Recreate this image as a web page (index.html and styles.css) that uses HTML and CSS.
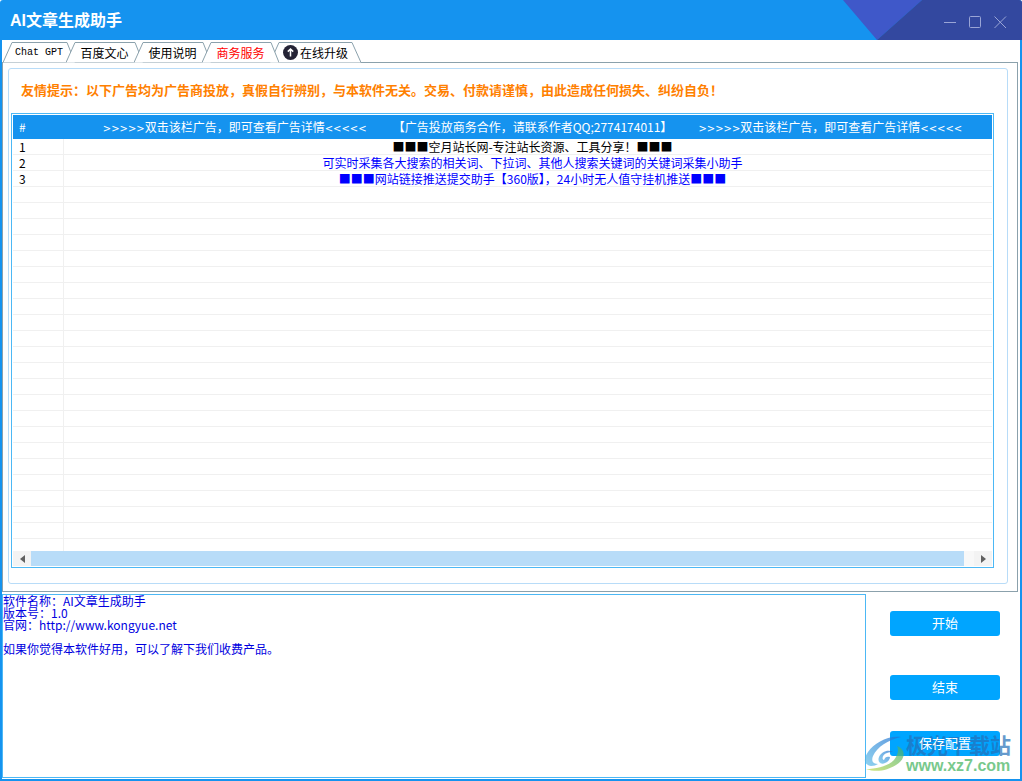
FILE: index.html
```html
<!DOCTYPE html>
<html lang="zh-CN">
<head>
<meta charset="utf-8">
<title>AI文章生成助手</title>
<link rel="stylesheet" href="styles.css">
</head>
<body>
<div class="window">
  <header class="titlebar">
    <h1 class="title">AI文章生成助手</h1>
    <div class="corner">
      <svg class="corner-art" viewBox="0 0 179 40" preserveAspectRatio="none" aria-hidden="true">
        <path d="M0 0H79L34 40Z" fill="#3f58c9"/>
        <path d="M79 0H179V40H34Z" fill="#33489f"/>
      </svg>
      <div class="controls">
        <button class="control" aria-label="最小化"><svg viewBox="0 0 13 13"><path d="M0 6.5H12"/></svg></button>
        <button class="control" aria-label="最大化"><svg viewBox="0 0 13 13"><rect x=".5" y=".5" width="11" height="11" rx="1"/></svg></button>
        <button class="control" aria-label="关闭"><svg viewBox="0 0 13 13"><path d="M.5 .5L12 12M12 .5L.5 12"/></svg></button>
      </div>
    </div>
  </header>
  <main class="content">
    <nav class="tabs">
      <button class="tab tab-mono"><svg class="tab-shape" viewBox="0 0 72 21" preserveAspectRatio="none"><path d="M0 20.5L9 .5H64L72 20.5"/></svg><span>Chat GPT</span></button>
      <button class="tab"><svg class="tab-shape" viewBox="0 0 77 21" preserveAspectRatio="none"><path d="M0 20.5L9 .5H69L77 20.5"/></svg><span>百度文心</span></button>
      <button class="tab"><svg class="tab-shape" viewBox="0 0 77 21" preserveAspectRatio="none"><path d="M0 20.5L9 .5H69L77 20.5"/></svg><span>使用说明</span></button>
      <button class="tab tab-active"><svg class="tab-shape" viewBox="0 0 77 21" preserveAspectRatio="none"><path d="M0 20.5L9 .5H69L77 20.5"/></svg><span>商务服务</span></button>
      <button class="tab tab-wide"><svg class="tab-shape" viewBox="0 0 91 21" preserveAspectRatio="none"><path d="M0 20.5L9 .5H82L91 20.5"/></svg><svg class="tab-icon" viewBox="0 0 15 15"><circle cx="7.5" cy="7.5" r="7.5" fill="#252436"/><path d="M7.5 11.5V4M4.8 6.6L7.5 4L10.2 6.6" fill="none" stroke="#fff" stroke-width="1.5"/></svg><span>在线升级</span></button>
    </nav>
    <section class="pane">
      <div class="group">
        <p class="notice">友情提示：以下广告均为广告商投放，真假自行辨别，与本软件无关。交易、付款请谨慎，由此造成任何损失、纠纷自负！</p>
        <div class="list">
          <div class="list-view">
            <table class="ads">
              <thead>
                <tr><th class="num">#</th><th><div class="ad-head"><span><span class="arrows">&gt;&gt;&gt;&gt;&gt;</span>双击该栏广告，即可查看广告详情<span class="arrows">&lt;&lt;&lt;&lt;&lt;</span></span><span>【广告投放商务合作，请联系作者QQ;2774174011】</span><span><span class="arrows">&gt;&gt;&gt;&gt;&gt;</span>双击该栏广告，即可查看广告详情<span class="arrows">&lt;&lt;&lt;&lt;&lt;</span></span></div></th></tr>
              </thead>
              <tbody>
                <tr class="plain"><td class="num">1</td><td>■■■空月站长网-专注站长资源、工具分享！■■■</td></tr>
                <tr><td class="num">2</td><td>可实时采集各大搜索的相关词、下拉词、其他人搜索关键词的关键词采集小助手</td></tr>
                <tr><td class="num">3</td><td>■■■网站链接推送提交助手【360版】，24小时无人值守挂机推送■■■</td></tr>
              </tbody>
            </table>
            <div class="empty-rows"></div>
          </div>
          <div class="scrollbar">
            <button class="arrow" aria-label="向左"><svg viewBox="0 0 5 8"><path d="M5 0V8L0 4Z"/></svg></button>
            <div class="track"><div class="thumb"></div></div>
            <button class="arrow" aria-label="向右"><svg viewBox="0 0 5 8"><path d="M0 0V8L5 4Z"/></svg></button>
          </div>
        </div>
      </div>
    </section>
    <section class="bottom">
      <textarea class="log" aria-label="日志" spellcheck="false">软件名称：AI文章生成助手
版本号：1.0
官网：http://www.kongyue.net

如果你觉得本软件好用，可以了解下我们收费产品。</textarea>
      <div class="actions">
        <button class="action">开始</button>
        <button class="action">结束</button>
        <button class="action action-save"><span>保存配置</span></button>
      </div>
    </section>
  </main>
  <div class="watermark">
    <svg class="mark-logo" viewBox="0 0 40 36" aria-hidden="true">
      <defs>
        <linearGradient id="blue" x1="0" y1="1" x2="1" y2="0"><stop offset="0" stop-color="#5fc0ea"/><stop offset="1" stop-color="#1f6fd0"/></linearGradient>
        <linearGradient id="green" x1="0" y1="1" x2="1" y2="0"><stop offset="0" stop-color="#c3dc4c"/><stop offset="1" stop-color="#3fae72"/></linearGradient>
      </defs>
      <path d="M37 1C24 -1 10 7 4 16C-1 23 0 29 7 30C10 30 12 29 14 28C9 28 7 25 9 20C13 11 24 4 37 1Z" fill="url(#blue)"/>
      <path d="M29 16C24 13 17 16 15 21C13 26 17 29 21 27C24 26 26 23 26 21C23 20 21 21 20 24C17 23 19 18 23 17C25 16 27 16 29 16Z" fill="url(#blue)"/>
      <path d="M33 10C43 14 41 24 32 29C24 34 13 37 2 33C13 33 24 30 30 24C34 19 35 14 33 10Z" fill="url(#green)"/>
    </svg>
    <div class="mark-text"><span class="mark-name">极光下载站</span><span class="mark-url">www.xz7.com</span></div>
  </div>
</div>
</body>
</html>
```
FILE: styles.css
```css
* { box-sizing: border-box; }
html, body { height: 100%; margin: 0; }
body {
  background: #fff;
  font-family: "Noto Sans CJK SC", sans-serif;
  font-size: 12px;
  color: #000;
}
button { border: 0; background: none; padding: 0; margin: 0; font: inherit; color: inherit; }
.window { position: relative; height: 100vh; display: flex; flex-direction: column; background: #1593ef; border-radius: 3px 3px 0 0; overflow: hidden; }
.titlebar { flex: none; height: 40px; display: flex; justify-content: space-between; align-items: center; padding-left: 10px; color: #fff; }
.title { margin: 0; padding-top: 2px; font-family: "Liberation Sans", "Noto Sans CJK SC", sans-serif; font-size: 16px; font-weight: 700; line-height: 24px; }
.corner { position: relative; width: 179px; height: 40px; display: flex; justify-content: flex-end; align-items: center; padding: 4px 15px 0 0; }
.corner-art { position: absolute; inset: 0; width: 100%; height: 100%; }
.controls { position: relative; display: flex; gap: 12px; }
.control { width: 13px; height: 13px; display: block; }
.control svg { display: block; width: 13px; height: 13px; fill: none; stroke: #9aa5d6; }

.content { flex: 1; min-height: 0; display: flex; flex-direction: column; margin: 0 2px 2px; background: #fff; }
.tabs { flex: none; display: flex; height: 23px; padding: 2px 0 0 1px; }
.tab { position: relative; width: 77px; height: 21px; margin-right: -9px; display: flex; align-items: center; justify-content: center; line-height: 18px; }
.tab span { position: relative; }
.tab-mono { width: 72px; font-family: "Liberation Mono", monospace; font-size: 10px; }
.tab-wide { width: 91px; gap: 2px; }
.tab-icon { position: relative; width: 15px; height: 15px; }
.tab-shape { position: absolute; inset: 0; width: 100%; height: 100%; fill: #fff; stroke: #8ba1ac; }
.tab-active { color: #f00; z-index: 1; }
.pane { flex: 1; min-height: 0; display: flex; margin: -1px 2px 0 0; padding: 5px 9px 7px 5px; border: 1px solid #8ba1ac; }
.group { flex: 1; min-width: 0; display: flex; flex-direction: column; padding: 0 13px 15px 2px; border: 1px solid #b8dcf8; border-radius: 3px; }
.notice { margin: 0; padding: 11px 0 13px 10px; font-size: 13px; font-weight: 700; line-height: 20px; color: #ff8000; white-space: nowrap; }
.list { flex: 1; min-height: 0; display: flex; flex-direction: column; padding: 1px; border: 1px solid #4cb8f5; }
.list-view { flex: 1; min-height: 0; overflow: hidden; display: flex; flex-direction: column; }
.ads { flex: none; width: calc(100% + 9px); border-collapse: separate; border-spacing: 0; table-layout: fixed; color: #00f; }
.ads th { height: 24px; padding: 0; font-weight: 400; line-height: 22px; background: #1593ef; color: #fff; white-space: nowrap; }
.ads td { height: 16px; padding: 0; line-height: 15px; text-align: center; white-space: nowrap; border-bottom: 1px solid #f0f0f0; }
.ads .num { width: 51px; padding-left: 6px; text-align: left; }
.ads td.num { border-right: 1px solid #f0f0f0; color: #000; }
.ads .plain { color: #000; }
.ad-head { display: flex; justify-content: center; gap: 26px; }
.arrows { font-family: "DejaVu Sans", sans-serif; font-size: 10px; line-height: 1; }
.empty-rows {
  flex: 1;
  background:
    linear-gradient(#f0f0f0, #f0f0f0) 50px 0 / 1px 100% no-repeat,
    repeating-linear-gradient(transparent 0 15px, #f0f0f0 15px 16px);
}
.scrollbar { flex: none; display: flex; height: 15px; background: #f8f8f8; }
.arrow { width: 18px; display: flex; align-items: center; justify-content: center; background: #f3f3f3; }
.arrow svg { width: 5px; height: 8px; fill: #606060; }
.track { flex: 1; padding-right: 10px; }
.thumb { height: 100%; background: #b8dcf8; }

.bottom { flex: none; display: flex; height: 187px; padding: 2px 20px 1px 0; }
.log { flex: 1; min-width: 0; padding: 0; border: 1px solid #4cb8f5; resize: none; outline: 0; background: #fff; color: #0000e0; font-family: "Noto Sans CJK SC", sans-serif; font-size: 12px; line-height: 12px; }
.actions { flex: none; width: 110px; margin-left: 24px; padding-top: 17px; display: flex; flex-direction: column; }
.action { height: 25px; margin-bottom: 39px; padding-bottom: 2px; border-radius: 3px; background: #00a5ff; color: #fff; font-size: 13px; line-height: 22px; }
.action-save { margin-top: -8px; margin-bottom: 0; }
.action-save span { position: relative; z-index: 2; }

.watermark { position: absolute; z-index: 1; right: 11px; bottom: 6px; display: flex; align-items: center; gap: 2px; opacity: .7; pointer-events: none; }
.mark-logo { width: 40px; height: 36px; }
.mark-text { display: flex; flex-direction: column; }
.mark-name { font-size: 21px; font-weight: 700; line-height: 25px; color: #2470b8; }
.mark-url { font-family: "Liberation Sans", sans-serif; font-size: 16px; font-weight: 700; line-height: 18px; color: #3fb35c; }
```
